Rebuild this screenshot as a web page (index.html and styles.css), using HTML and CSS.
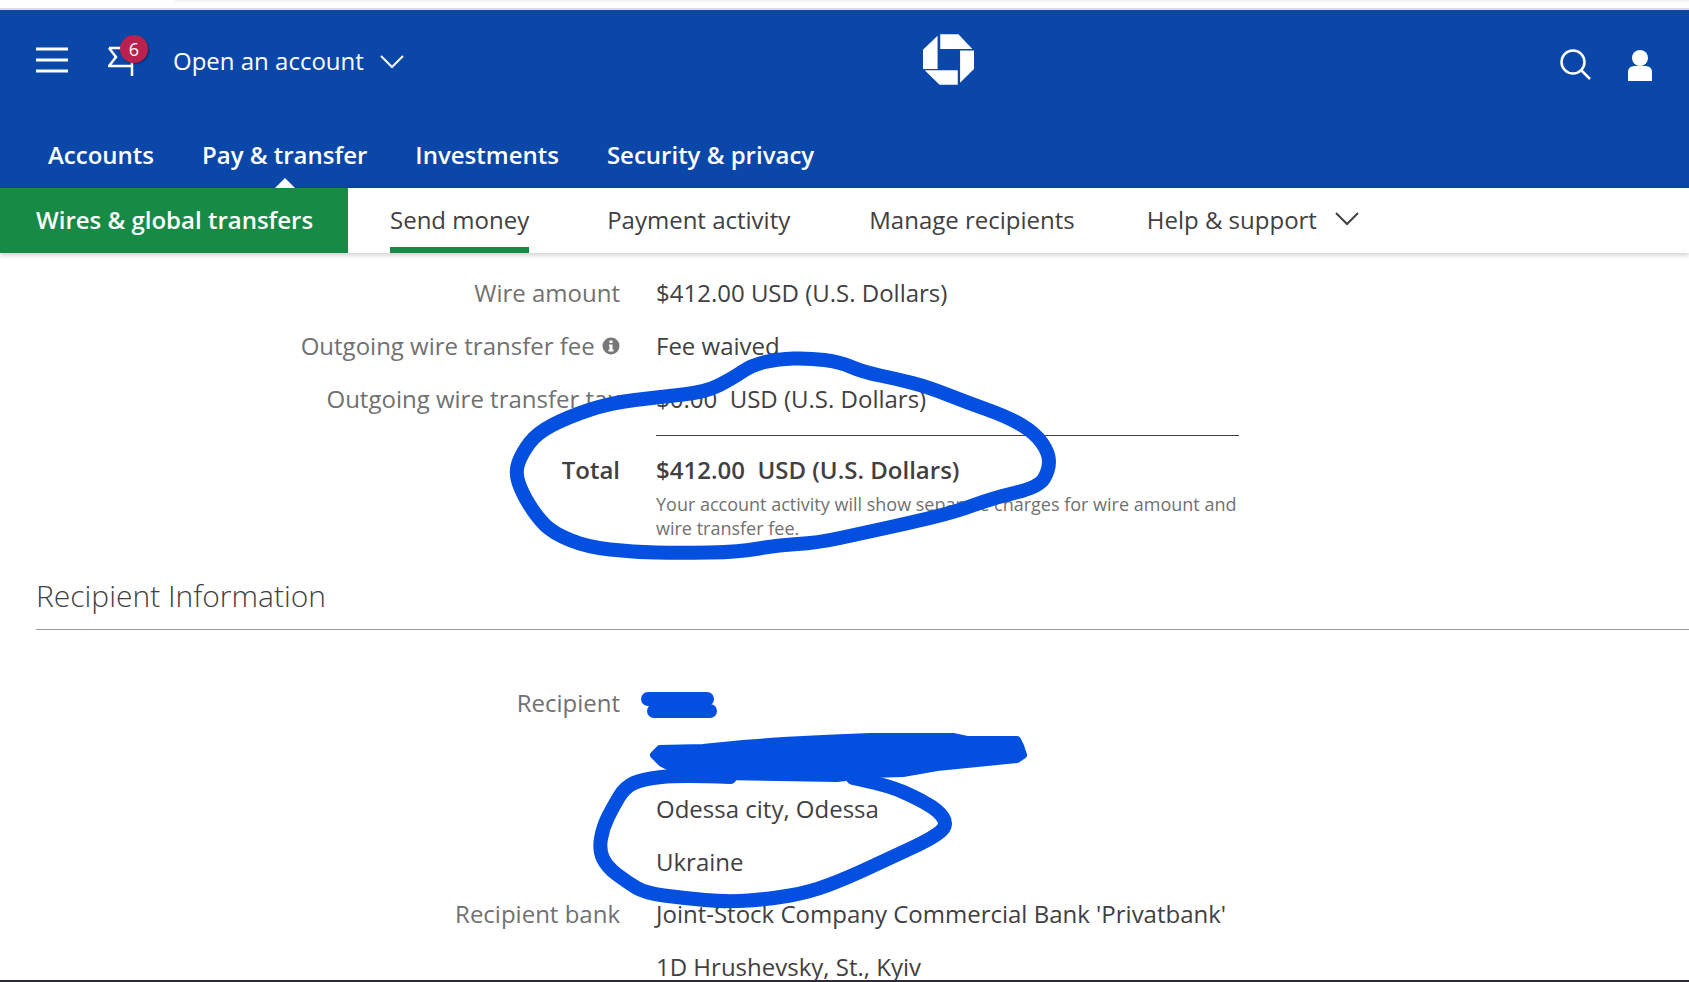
FILE: index.html
```html
<!DOCTYPE html>
<html lang="en">
<head>
<meta charset="utf-8">
<title>Wires &amp; global transfers</title>
<link rel="stylesheet" href="styles.css">
</head>
<body>
<div class="page">
  <div class="top-strip"><div class="top-strip-bar"></div></div>
  <header class="header">
    <div class="utility">
      <svg class="hamburger" viewBox="0 0 32 26"><path d="M0 2H32M0 13H32M0 24H32"/></svg>
      <div class="flag">
        <svg class="flag-icon" viewBox="0 0 26 30"><path d="M1 2H24V30M1 2L8 11L1 20H24"/></svg>
        <span class="badge">6</span>
      </div>
      <span class="open-account">Open an account</span>
      <svg class="chevron" viewBox="0 0 24 14"><path d="M1 1L12 12L23 1"/></svg>
      <svg class="logo" viewBox="128 73 154 153"><path d="M180 73H235L277 118H180ZM240 122H282V178L240 220ZM133 182H233V226H178ZM172 78V178H128V120Z"/></svg>
      <svg class="search" viewBox="0 0 32 32"><circle cx="13" cy="13" r="11.5"/><path d="M21.5 21.5L30 30"/></svg>
      <svg class="user" viewBox="0 0 24 31"><circle cx="12" cy="8" r="8"/><path d="M0 31V22C0 18 3 16 7 16H17C21 16 24 18 24 22V31Z"/></svg>
    </div>
    <nav class="main-nav">
      <a class="main-link">Accounts</a>
      <a class="main-link active">Pay &amp; transfer</a>
      <a class="main-link">Investments</a>
      <a class="main-link">Security &amp; privacy</a>
    </nav>
  </header>
  <nav class="sub-nav">
    <div class="section-tab">Wires &amp; global transfers</div>
    <a class="sub-link current">Send money</a>
    <a class="sub-link">Payment activity</a>
    <a class="sub-link sub-manage">Manage recipients</a>
    <a class="sub-link sub-help">Help &amp; support</a>
    <svg class="chevron dark" viewBox="0 0 24 14"><path d="M1 1L12 12L23 1"/></svg>
  </nav>
  <main class="content">
    <div class="row"><div class="label">Wire amount</div><div class="value">$412.00 USD (U.S. Dollars)</div></div>
    <div class="row"><div class="label">Outgoing wire transfer fee <svg class="info" viewBox="0 0 18 18"><circle cx="9" cy="9" r="8.5"/><path class="info-mark" d="M7.5 3.5H10.5V6H7.5ZM7 7.5H10.5V12.5H11.5V14.5H6.500V12.5H7.500V9.500H7Z"/></svg></div><div class="value">Fee waived</div></div>
    <div class="row"><div class="label">Outgoing wire transfer tax</div><div class="value pre">$0.00  USD (U.S. Dollars)</div></div>
    <div class="divider"></div>
    <div class="row total"><div class="label">Total</div><div class="value pre">$412.00  USD (U.S. Dollars)</div></div>
    <p class="note">Your account activity will show separate charges for wire amount and wire transfer fee.</p>
    <h2 class="section-title">Recipient Information</h2>
    <div class="row"><div class="label">Recipient</div><div class="value"></div></div>
    <div class="row"><div class="label"></div><div class="value"></div></div>
    <div class="row"><div class="label"></div><div class="value">Odessa city, Odessa</div></div>
    <div class="row"><div class="label"></div><div class="value">Ukraine</div></div>
    <div class="row"><div class="label">Recipient bank</div><div class="value">Joint-Stock Company Commercial Bank 'Privatbank'</div></div>
    <div class="row"><div class="label"></div><div class="value">1D Hrushevsky, St., Kyiv</div></div>
  </main>
  <svg class="scribbles" viewBox="0 0 1689 982">
    <polygon class="ink-fill" points="654,755 660,749 703,748 743,744 783,741 823,739 870,737 953,737 967,740 1017,740 1020,746 1023,755 1017,759 987,762 937,767 903,773 870,774 837,778 723,776 723,774 670,767 662,763"/>
    <path class="ink ink-thin" d="M648 699H707M654 711H710"/>
    <path class="ink" d="M683 394.5Q706 392 719.500 385Q733 378 742.500 371.500Q752 365 765 362Q778 359 793.500 358.500Q809 358 824.500 360Q840 362 851.500 367Q863 372 880 375.500Q897 379 912.500 383Q928 387 947 394.500Q966 402 987 409.500Q1008 417 1021.500 425Q1035 433 1042 443Q1049 453 1049 461.500Q1049 470 1044 478.500Q1039 487 1016 492.500Q993 498 974 505Q955 512 932 517.500Q909 523 886 528Q863 533 840 538Q817 543 797.500 544Q778 545 759 548.500Q740 552 709.500 552.500Q679 553 656 552.500Q633 552 610 549.500Q587 547 570 540Q553 533 545 525Q537 517 529.500 505Q522 493 518.500 482.500Q515 472 518.500 462.500Q522 453 529.500 443Q537 433 552.500 425Q568 417 589 410Q610 403 635 400Q660 397 683 394.500Z"/>
    <path class="ink ink-thin" d="M730 777Q680 775 661.500 777Q643 779 634 783Q625 787 619 797Q613 807 608 817Q603 827 601 838.500Q599 850 603 858.500Q607 867 617 874.500Q627 882 636 887.500Q645 893 664 895.500Q683 898 705 900Q727 902 748.500 900.500Q770 899 790 895.500Q810 892 828.500 885Q847 878 868.500 868Q890 858 911.500 848Q933 838 940.500 831.500Q948 825 943 817.500Q938 810 927 804Q917 798 902 791.500Q887 785 853 778"/>
  </svg>
  <div class="bottom-rule"></div>
</div>
</body>
</html>
```

FILE: styles.css
```css
* { box-sizing: border-box; }
html, body { margin: 0; padding: 0; background: #fff; }
body { font-family: "Open Sans", "Noto Sans", sans-serif; color: #414042; }
.page { position: relative; width: 1689px; height: 982px; overflow: hidden; }

.top-strip { height: 10px; border-bottom: 2px solid #dcdcdc; }
.top-strip-bar { height: 2px; margin-left: 175px; background: #f2f2f2; }

.header { height: 178px; background: #0a47a8; color: #fff; display: flex; flex-direction: column; }
.utility { height: 110px; display: flex; align-items: flex-start; padding-left: 36px; }
.hamburger { width: 32px; height: 26px; margin-top: 37px; flex: none; }
.hamburger path, .chevron path, .flag-icon path, .search circle, .search path { fill: none; stroke: #fff; }
.hamburger path { stroke-width: 3; }
.flag { position: relative; width: 26px; height: 30px; margin: 36px 0 0 40px; flex: none; }
.flag-icon { position: absolute; left: 0; top: 0; width: 26px; height: 30px; }
.flag-icon path { stroke-width: 2.5; }
.badge { position: absolute; left: 12px; top: -11px; width: 28px; height: 28px; border-radius: 50%; background: #b9214f; box-shadow: 1px 1px 2px rgba(0,0,0,.4); color: #fff; font-size: 18px; line-height: 28px; text-align: center; }
.open-account { margin: 34px 0 0 39px; font-size: 24px; line-height: 34px; white-space: nowrap; }
.chevron { width: 24px; height: 14px; margin: 45px 0 0 16px; flex: none; }
.chevron path { stroke-width: 2; }
.logo { width: 51px; height: 51px; margin: 24px 0 0 519px; flex: none; fill: #fff; }
.search { width: 32px; height: 32px; margin: 39px 0 0 586px; flex: none; }
.search circle, .search path { stroke-width: 2.5; }
.user { width: 24px; height: 31px; margin: 40px 0 0 36px; flex: none; fill: #fff; }

.main-nav { display: flex; gap: 48px; padding-left: 48px; height: 68px; }
.main-link { position: relative; font-size: 24px; font-weight: 600; line-height: 34px; padding-top: 18px; color: #fff; white-space: nowrap; }
.main-link.active::after { content: ""; position: absolute; left: 50%; bottom: 0; margin-left: -10px; border-left: 10px solid transparent; border-right: 10px solid transparent; border-bottom: 10px solid #fff; }

.sub-nav { position: relative; z-index: 1; display: flex; align-items: stretch; height: 65px; background: #fff; box-shadow: 0 2px 5px rgba(0,0,0,.2); }
.section-tab { width: 348px; padding-left: 36px; background: #178a45; color: #fff; font-size: 24px; font-weight: 600; line-height: 63px; white-space: nowrap; }
.sub-link { margin-left: 42px; height: 65px; font-size: 24px; line-height: 63px; color: #414042; white-space: nowrap; }
.sub-link + .sub-link { margin-left: 78px; }
.sub-link.sub-manage { margin-left: 79px; }
.sub-link.sub-help { margin-left: 72px; }
.sub-link.current { border-bottom: 6px solid #178a45; }
.chevron.dark { margin: 24px 0 0 18px; }
.chevron.dark path { stroke: #414042; }

.content { padding-top: 14px; }
.row { display: grid; grid-template-columns: 620px 1fr; column-gap: 36px; height: 52.8px; font-size: 24px; line-height: 52.8px; }
.label { text-align: right; color: #717171; white-space: nowrap; }
.value { white-space: nowrap; }
.pre { white-space: pre; }
.info { width: 18px; height: 18px; vertical-align: 0; margin-left: 1px; }
.info circle { fill: #777; }
.info-mark { fill: #fff; }
.divider { height: 1px; margin: 10px 0 0 656px; width: 583px; background: #414042; }
.total { margin-top: 8px; font-weight: 600; }
.total .label { color: #414042; }
.note { width: 583px; margin: -5px 0 0 656px; font-size: 18px; line-height: 24px; color: #717171; }
.section-title { margin: 33px 0 0 36px; padding-bottom: 10px; border-bottom: 1px solid #9a9a9a; font-size: 30px; font-weight: 300; line-height: 46px; color: #414042; }
.section-title + .row { margin-top: 47px; }

.scribbles { position: absolute; left: 0; top: 0; width: 1689px; height: 982px; pointer-events: none; }
.ink { fill: none; stroke: #0350e0; stroke-width: 14; stroke-linejoin: round; stroke-linecap: round; }
.ink-thin { stroke-width: 14; }
.ink-fill { fill: #0350e0; stroke: #0350e0; stroke-width: 8; stroke-linejoin: round; }
.bottom-rule { position: absolute; left: 0; right: 0; bottom: 0; height: 2px; background: #2a2a3a; }
```
